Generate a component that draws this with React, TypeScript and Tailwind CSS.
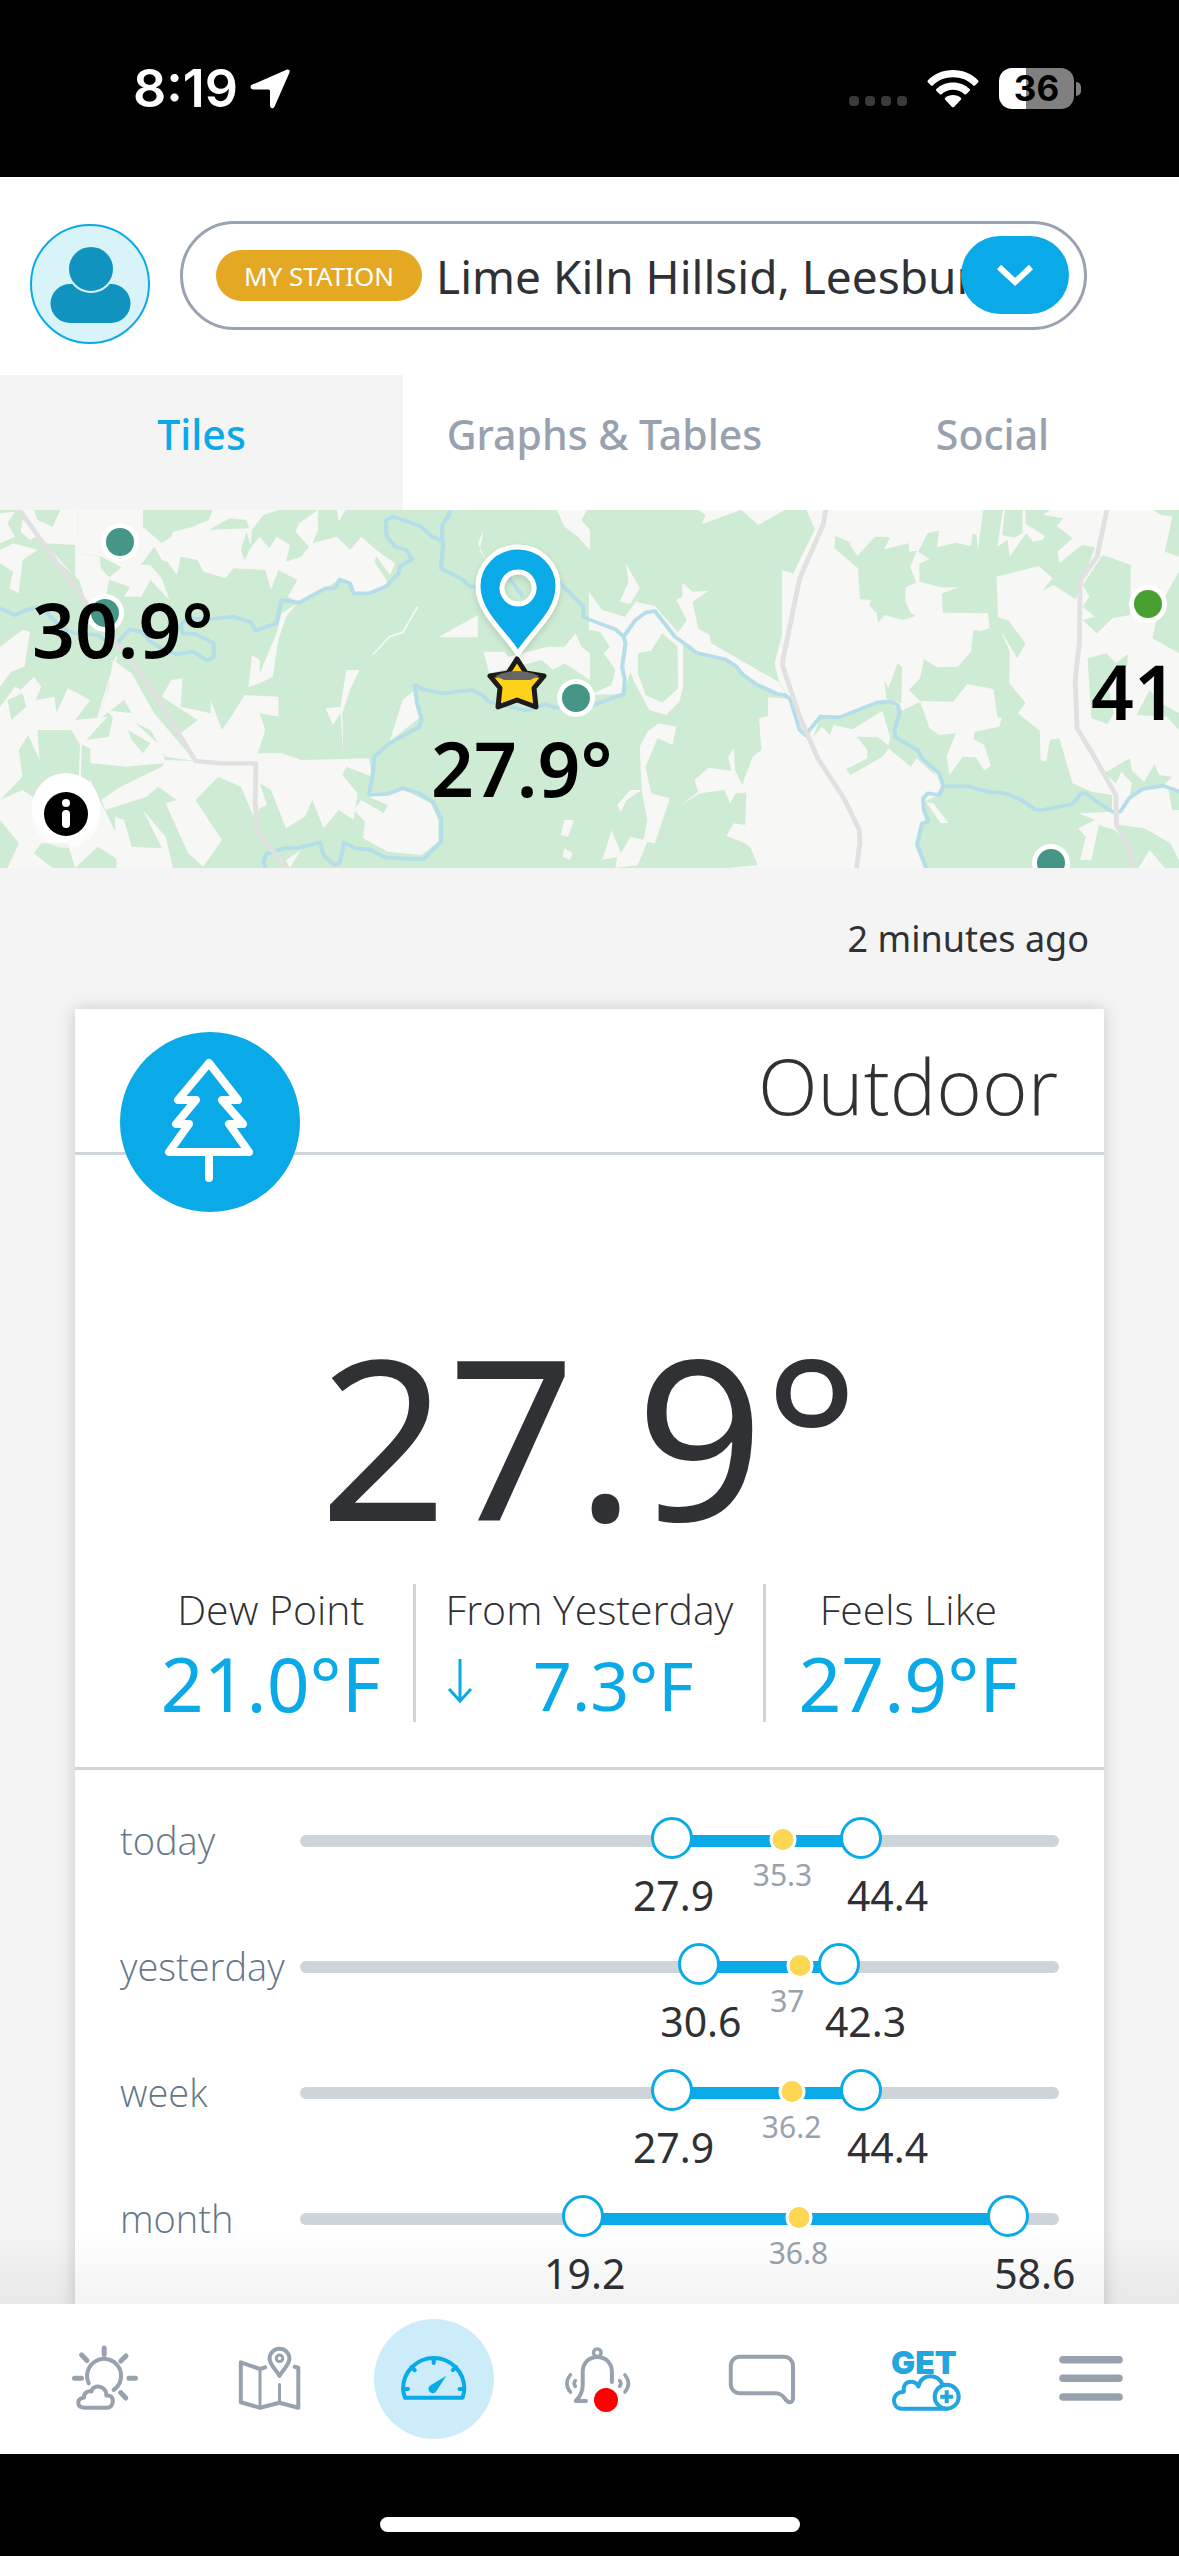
import { useState } from "react";
import type { ReactNode } from "react";
import clsx from "clsx";

type RangeRow = {
  label: string;
  min: string;
  avg: string;
  max: string;
  pos: [number, number, number]; // min / avg / max as a percentage of the track
};

const tabs = ["Tiles", "Graphs & Tables", "Social"];

const ranges: RangeRow[] = [
  { label: "today", min: "27.9", avg: "35.3", max: "44.4", pos: [49, 63.6, 73.9] },
  { label: "yesterday", min: "30.6", avg: "37", max: "42.3", pos: [52.6, 65.9, 71] },
  { label: "week", min: "27.9", avg: "36.2", max: "44.4", pos: [49, 64.8, 73.9] },
  { label: "month", min: "19.2", avg: "36.8", max: "58.6", pos: [37.3, 65.7, 93.3] },
];

// open land, drawn over the forest colour (west half)
const landWest = [
  "50,30 205,30 208,160 265,170 268,205 290,232 330,195 400,195 430,235 450,300 400,240 375,290 330,290 345,260 290,240 280,300 230,310 210,240 160,190 130,140",
  "205,30 380,30 380,80 430,130 455,110 460,95 530,75 540,90 670,85 665,145 690,110 715,145 735,110 770,135 760,185 800,170 830,130 895,110 930,150 960,110 1000,150 1050,190 1025,255 980,280 940,280 930,250 903,238 865,265 795,308 765,290 790,240 740,210 720,270 705,210 620,205 600,235 540,215 525,180 480,170 470,225 445,185 430,180 410,140 370,200 320,200 270,170 208,160",
  "565,30 740,30 700,45 665,95 655,60 610,55 540,100 520,75 555,60",
  "795,70 845,30 845,90 825,145 785,95",
  "895,30 918,30 900,65",
  "0,40 40,35 20,70 40,110 0,130",
  "0,150 35,130 100,150 60,180 50,280 25,265 35,215 0,190",
  "60,60 110,100 80,120 55,95",
  "0,440 60,390 80,395 65,500 30,515 0,560",
  "0,620 40,560 55,570 90,530 110,560 95,600 145,590 150,640 180,565 240,600 200,660 285,650 230,720 320,705 350,730 340,800 240,790 240,745 210,730 190,690 100,690 105,780 75,705 50,750 60,830 0,900",
  "300,480 350,520 410,640 500,760 520,783 440,770 400,690 360,670 430,740 440,790 330,800 320,740 285,735 300,650 280,630 350,640 330,600 260,660 290,560",
  "430,590 455,540 485,535 480,620 560,640 560,600 590,690 620,640 650,585 740,590 740,650 690,640 705,690 685,760 750,760 800,780 980,775 990,830 920,800 910,825 950,880 940,960 900,930 860,985 830,900 810,950 760,985 720,870 690,850 710,915 690,925 678,960 640,860 580,830 520,900 560,970 590,1020 540,1100 500,1060 440,910 470,900 420,860 390,890 280,930 270,900 320,860 430,800 440,780 520,783 480,700 525,660",
  "660,560 670,465 690,480 690,520 735,400 748,340 790,310 760,350 740,420 725,530 690,550",
  "920,510 955,510 930,570 910,640 912,765 905,640 885,675 865,625 905,620",
  "1070,600 1102,570 1118,650 1035,725",
  "1035,880 1075,870 1145,910 1165,960 1165,1025 1120,1065 1030,1055 965,1015 970,965 940,930 960,900 1020,940 1030,915 980,890",
  "1285,90 1275,150 1300,200 1270,130",
  "1165,412 1270,345 1270,412",
  "1285,455 1340,455 1350,470 1455,440 1500,440 1530,400 1545,440 1568,460 1568,540 1500,490 1470,510 1440,480 1300,520",
  "1480,30 1560,30 1545,60 1568,90 1568,150 1535,110 1500,80",
  "1500,960 1525,960 1510,1010 1490,1005",
  "1500,1045 1522,1060 1515,1080 1495,1070",
  "0,900 60,870 100,900 150,920 240,840 265,900 300,980 330,1060 420,1065 420,1104 350,1104 260,1040 200,1104 180,1030 110,1030 90,1060 140,1104 20,1104 50,1030 0,960",
  "305,950 330,960 350,1040 430,1045 380,930 440,1010 460,1104 310,1104",
  "760,1080 800,1050 770,1104",
];

// patches of forest inside the open land (west half)
const forestWest = [
  "90,30 160,30 140,80 100,60",
  "120,130 200,135 200,230 175,200",
  "1000,170 1040,230 1030,245 995,185",
  "640,150 655,95 668,140 650,180",
  "20,600 60,580 70,620 30,660",
  "130,760 200,750 190,800 150,820",
  "340,690 400,730 380,760 350,720",
];

// open land, drawn over the forest colour (east half)
const landEast = [
  "578,30 1568,30 1568,1104 370,1104 448,1095 430,1045 415,1030 365,1008 385,970 415,975 418,880 405,860 435,770 458,750 452,655 476,648 476,592 535,597 505,545 493,490 513,405 513,210 543,220 600,88",
  "290,30 405,30 300,72 310,45",
  "405,30 520,30 450,75",
  "98,190 135,265 110,312 82,305 105,245",
  "248,248 275,275 318,272 275,305 290,385 320,405 325,430 503,545 535,597 500,582 445,553 410,525 362,478 285,458 228,410 260,360 232,300 248,290",
  "0,360 0,275 35,330 95,350 125,305 175,318 235,395 250,430 250,560 240,605 205,645 160,630 120,545 110,515 92,582 0,585 60,555 70,510 40,460 55,440 30,395 0,390",
  "185,670 232,680 222,735 182,715 150,800 165,880 215,895 175,1030 155,1025 130,1095 70,1104 75,1070 35,1080 60,990 85,1060 110,1010 145,1020 155,960 140,870 100,900 85,935 75,915 110,870 140,870 135,740 155,695",
  "280,840 318,803 378,812 370,770 385,745 388,810 410,860 415,880 390,880 375,910 360,870 295,880 245,915 290,875",
];

const forestEast = [
  "655,108 698,128 690,128 713,168 760,110 800,112 785,148 850,130 850,155 872,152 853,200 870,248 842,262 840,300 853,335 868,348 835,360 785,345 768,370 765,340 745,315 750,300 720,298 715,205 652,145",
  "878,190 905,178 875,155 900,100 930,92 925,142 975,128 1015,138 1020,100 1030,105 1033,155 1048,30 1100,30 1085,140 1112,120 1118,170 1162,100 1180,125 1205,120 1212,108 1160,72 1160,30 1225,30 1207,45 1260,55 1243,78 1285,115 1245,155 1250,190 1310,135 1345,142 1293,298 1235,255 1205,272 1232,235 1195,198 1083,230 1087,352 1115,362 1160,430 1138,475 1100,402 1035,395 1065,385 1060,340 940,338 938,280 985,262 935,262 878,245",
  "1105,30 1152,30 1152,100 1130,113 1098,105",
  "890,478 925,502 980,500 1035,490 1118,455 1117,550 1160,608 1140,640 1198,692 1200,780 1215,785 1225,720 1250,715 1285,850 1335,875 1390,885 1390,935 1308,880 1285,912 1205,930 1150,900 1060,875 942,858 930,820 875,752 815,712 826,635 880,605 905,685 930,705 975,700 950,770 958,825 993,770 1028,772 1050,810 1068,798 1050,735 1022,718 1025,695 1090,680 1097,655 1085,650 1075,567 1005,552 968,605 880,603 850,570 880,535",
  "1022,390 1098,402 1118,455 1030,500 980,500 1015,455",
  "785,540 795,565 820,490 832,500 830,610 790,595",
  "595,712 620,680 640,705 650,675 700,688 780,632 800,712 795,745 855,800 870,775 925,830 875,752 812,712 826,635 800,604 765,608 665,652 615,652",
  "712,710 768,712 800,740 780,770 695,825 683,808 740,775 740,750",
  "942,858 1060,875 1150,900 1205,930 1285,912 1308,880 1390,935 1300,940 1345,960 1300,985 1320,1010 1305,1080 1335,1080 1355,975 1397,990 1430,1030 1440,1104 898,1104 872,1035 885,970 902,965 888,920 895,905 935,970 955,968 915,910 890,905 930,885",
  "1410,975 1475,985 1545,1030 1568,1080 1568,1104 1530,1104 1490,1050 1460,1104 1445,1104 1442,1070",
  "1365,165 1440,195 1438,345 1390,355 1350,400 1312,360 1345,350 1312,320 1330,290 1312,255",
  "1325,475 1375,460 1400,490 1432,462 1430,500 1380,560 1395,640 1378,672 1335,655",
  "1500,30 1568,30 1568,170 1530,155 1550,50 1520,45",
  "1568,215 1530,290 1510,350 1497,415 1568,460",
  "1455,645 1490,570 1520,610 1568,640 1568,690 1535,650",
  "1370,818 1438,775 1443,812 1475,845 1503,792 1515,825 1550,830 1525,857 1470,868 1435,895 1443,850 1415,815 1400,850",
  "1540,870 1568,875 1568,930 1550,930",
  "130,460 165,452 195,400 235,440 237,565 195,608 150,585 130,520",
];

const riversWest = [
  "0,325 40,345 70,330 100,322 130,345 165,385 200,400 260,405 285,425 310,430 345,388 375,395 400,425 430,445 470,463 515,455 550,482 568,470 568,430 520,402 485,400 480,375 500,355 560,357 620,350 665,365 680,392 735,370 748,300 795,308 865,265 890,265 903,238 930,250 940,280 980,280 1025,260 1060,220 1062,200 1095,178 1080,150 1050,140 1028,110 1025,62 1045,50 1120,80 1145,108 1178,125 1172,205 1225,235 1250,260 1300,262",
  "1195,30 1193,45 1175,75 1175,120",
  "1350,230 1390,290",
  "1480,240 1520,285 1550,320 1550,350 1570,358",
  "980,885 990,830 995,770 1035,730 1115,680 1120,655 1108,610 1102,555 1125,568 1175,580 1255,570 1280,585 1300,605 1400,632 1450,612 1470,622 1570,620",
  "980,885 1030,882 1070,865 1110,878 1150,905 1172,955 1172,1025 1125,1078 1025,1073 980,1048 945,1045 915,1028 902,1090 888,1095 860,1065 850,1028 795,1043 755,1045 708,1062 700,1085 708,1110",
];

const riversEast = [
  "0,358 70,388 92,410 97,430 88,500 95,540 92,582 0,620",
  "92,410 122,362 150,338 175,333 228,410 265,440 285,458 362,478 390,498 410,525 445,553 500,582 520,585 535,597 560,690 575,705 615,650 665,652 765,608 800,604 820,615 826,635 812,690 815,712 875,752 885,775 930,820 942,858 1010,860 1060,875 1105,880 1150,900 1185,928 1205,930 1285,912 1308,880 1320,880 1350,905 1390,935 1412,935 1435,895 1470,868 1525,857 1570,875",
  "942,858 930,885 900,880 888,895 890,930 902,965 885,970 872,1035 898,1110",
];

const roadsWest = ["50,26 130,155 230,310 315,440 355,490 420,600 520,783 585,790 685,790", "680,790 678,910 685,1000 768,1110"];

const roadsEast = [
  "630,26 622,75 560,235 515,480 515,500 560,650 608,775 680,900 718,990 720,1030 710,1110",
  "1377,26 1350,170 1307,240 1305,260 1303,430 1292,540 1297,685 1340,765 1400,885 1402,975 1430,1030 1442,1070 1440,1110",
];

function Shapes({ items, fill }: { items: string[]; fill: string }) {
  return <>{items.map((p) => <polygon key={p} points={p} fill={fill} />)}</>;
}

function Lines({ items, stroke, width }: { items: string[]; stroke: string; width: number }) {
  return (
    <>
      {items.map((p) => (
        <polyline key={p} points={p} fill="none" stroke={stroke} strokeWidth={width} strokeLinejoin="round" />
      ))}
    </>
  );
}

function StationDot({ x, y, color = "#459687" }: { x: number; y: number; color?: string }) {
  return (
    <g>
      <circle cx={x} cy={y} r="19" fill="#fff" />
      <circle cx={x} cy={y} r="14" fill={color} />
    </g>
  );
}

function StationMap() {
  return (
    <section aria-label="Station map" className="relative">
      <svg viewBox="0 0 1179 358" className="block w-full">
        <rect width="1179" height="358" fill="#ceebd3" />
        <g transform="scale(0.3763 0.3333) translate(0 -30)">
          <Shapes items={landWest} fill="#f7f7f5" />
          <Shapes items={forestWest} fill="#ceebd3" />
          <Lines items={riversWest} stroke="#b3deea" width={11} />
          <Lines items={roadsWest} stroke="#e1e1e1" width={13} />
          <Lines items={["310,470 260,655 215,730 212,840", "1110,320 1070,398 1035,410 990,465"]} stroke="#f7f7f5" width={5} />
        </g>
        <g transform="translate(589 0) scale(0.3763 0.3333) translate(0 -30)">
          <Shapes items={landEast} fill="#f7f7f5" />
          <Shapes items={forestEast} fill="#ceebd3" />
          <Lines items={riversEast} stroke="#b3deea" width={11} />
          <Lines items={roadsEast} stroke="#e1e1e1" width={13} />
        </g>

        <StationDot x={120} y={32} />
        <StationDot x={105} y={103} />
        <StationDot x={576} y={188} />
        <StationDot x={1051} y={353} />
        <StationDot x={1148} y={94} color="#47a02f" />

        <g className="drop-shadow-md">
          <path
            d="M518 144 C505 122 478 104 478 76 A40 39 0 0 1 558 76 C558 104 531 122 518 144Z M518 62 a16 16 0 1 0 0.1 0Z"
            fill="#0aa9e8"
            fillRule="evenodd"
            stroke="#fff"
            strokeWidth="5"
          />
        </g>
        <path
          d="M517 149 L526 163 L544 166 L534 178 L536 197 L517 190 L498 197 L500 178 L490 166 L508 163Z"
          fill="#ffd21a"
          stroke="#1c1b17"
          strokeWidth="5"
          strokeLinejoin="round"
        />
        <path d="M495 166 Q517 156 539 166 L530 170 H504Z" fill="#666" />

        <g fontFamily="'Noto Sans', sans-serif" fontWeight="600" fontSize="75" fill="#000">
          <text x="32" y="148">30.9°</text>
          <text x="431" y="287">27.9°</text>
          <text x="1091" y="210">41</text>
        </g>
      </svg>
      <button type="button" aria-label="Map information" className="absolute bottom-5 left-7 size-19">
        <svg viewBox="0 0 76 76" className="size-full">
          <circle cx="38" cy="42" r="34" fill="#fff" opacity="0.6" />
          <circle cx="38" cy="35" r="34" fill="#fff" />
          <circle cx="38" cy="42" r="22" fill="#000" />
          <circle cx="38" cy="31" r="4" fill="#fff" />
          <rect x="34" y="38" width="8" height="18" rx="4" fill="#fff" />
        </svg>
      </button>
    </section>
  );
}

function StatusBar() {
  return (
    <div className="flex h-[177px] shrink-0 items-center justify-between bg-black pr-[98px] pl-[133px] text-white">
      <div className="flex items-center gap-3 font-['Inter',sans-serif]">
        <span className="text-[52px] leading-none font-semibold">8:19</span>
        <svg viewBox="0 0 40 40" className="size-10 fill-white">
          <path d="M36.5 0.8 C38.8 -0.2 40.4 1.4 39.4 3.8 L24.6 37.4 C23.4 40.2 20 39.6 20 36.4 V22 Q20 20.4 18.4 20.4 H3.6 C0.2 20.4 -0.6 17 2.4 15.6Z" />
        </svg>
      </div>
      <div className="flex items-center">
        <div className="mt-6 mr-5 flex gap-[6px]">
          {[0, 1, 2, 3].map((i) => (
            <span key={i} className="size-[10px] rounded-[4px] bg-[#3a3a3a]" />
          ))}
        </div>
        <svg viewBox="0 0 52 38" className="mr-5 h-[38px] w-[52px] fill-white">
          <path d="M26 0 C36 0 45 3.8 51.2 10.4 Q52 11.3 51.2 12.2 L48 15.4 Q47.1 16.2 46.2 15.4 C41 10 34 7.2 26 7.2 S11 10 5.8 15.4 Q4.9 16.2 4 15.4 L0.8 12.2 Q0 11.3 0.8 10.4 C7 3.8 16 0 26 0Z" />
          <path d="M26 12.4 C32.6 12.4 38.4 14.9 42.7 19 Q43.6 19.9 42.7 20.8 L39.2 24.2 Q38.3 25 37.4 24.2 C34.3 21.4 30.4 19.7 26 19.7 S17.7 21.4 14.6 24.2 Q13.7 25 12.8 24.2 L9.3 20.8 Q8.4 19.9 9.3 19 C13.6 14.9 19.4 12.4 26 12.4Z" />
          <path d="M26 25 C29 25 31.7 26 33.8 27.8 Q34.8 28.7 33.8 29.7 L27 36.9 Q26 37.8 25 36.9 L18.2 29.7 Q17.2 28.7 18.2 27.8 C20.3 26 23 25 26 25Z" />
        </svg>
        <div className="flex h-[41px] w-[75px] items-center justify-center rounded-[13px] bg-[linear-gradient(90deg,#fff_36%,#808080_36%)] font-['Inter',sans-serif] text-[35px] leading-none font-bold text-black">
          36
        </div>
        <span className="ml-[2px] h-[14px] w-[5px] rounded-r-full bg-[#808080]" />
      </div>
    </div>
  );
}

function Header() {
  return (
    <header className="flex shrink-0 items-start bg-white px-[30px] pt-11 pb-[30px]">
      <button type="button" aria-label="Account" className="mt-[3px] mr-[30px] shrink-0 rounded-full">
        <svg viewBox="0 0 120 120" className="mb-px size-30">
          <circle cx="60" cy="60" r="59" fill="#d9f4f9" stroke="#0aa9e8" strokeWidth="2" />
          <path d="M40 60 H81 A19.5 19.5 0 0 1 81 99 H40 A19.5 19.5 0 0 1 40 60Z" fill="#1193bf" />
          <circle cx="61" cy="45" r="23" fill="#1193bf" stroke="#d9f4f9" strokeWidth="2" />
        </svg>
      </button>
      <div className="relative mr-[62px] flex h-[109px] min-w-0 flex-1 items-center rounded-full border-3 border-[#98a2b0] pr-4 pl-[33px]">
        <span className="mr-[14px] flex h-[51px] shrink-0 items-center rounded-full bg-[#e5a823] px-7 text-[26px] leading-none text-white">
          MY STATION
        </span>
        <select
          aria-label="Station"
          className="min-w-0 flex-1 appearance-none bg-transparent text-[46px] leading-[64px] text-[#303134] outline-none"
        >
          <option>Lime Kiln Hillsid, Leesburg</option>
        </select>
        <span className="pointer-events-none absolute top-3 right-[15px] flex h-[78px] w-[108px] items-center justify-center rounded-full bg-[#0aa9e8]">
          <svg viewBox="0 0 40 24" className="h-6 w-10">
            <path d="M4 4 L20 19 L36 4" fill="none" stroke="#fff" strokeWidth="6" />
          </svg>
        </span>
      </div>
    </header>
  );
}

function Stat({ label, children, className }: { label: string; children: ReactNode; className?: string }) {
  return (
    <div className={clsx("flex h-[138px] flex-col items-center", className)}>
      <span className="font-['Open_Sans',sans-serif] text-[41px] leading-[50px] font-light whitespace-nowrap text-[#303134]">{label}</span>
      {children}
    </div>
  );
}

function Range({ row }: { row: RangeRow }) {
  const [min, avg, max] = row.pos;
  return (
    <div className="flex h-[126px] items-start">
      <span className="w-[180px] shrink-0 font-['Open_Sans',sans-serif] text-[38px] leading-[60px] font-light text-[#657789]">
        {row.label}
      </span>
      <div className="relative mt-[25px] h-3 flex-1 rounded-full bg-[#cdd4da]">
        <div className="absolute h-full bg-[#0aa9e8]" style={{ left: `${min}%`, width: `${max - min}%` }} />
        <span
          className="absolute top-[-9px] size-[27px] -translate-x-1/2 rounded-full border-3 border-white bg-[#fdd654]"
          style={{ left: `${avg}%` }}
        />
        <span
          className="absolute top-[-18px] size-[42px] -translate-x-1/2 rounded-full border-3 border-[#0aa9e8] bg-white"
          style={{ left: `${min}%` }}
        />
        <span
          className="absolute top-[-18px] size-[42px] -translate-x-1/2 rounded-full border-3 border-[#0aa9e8] bg-white"
          style={{ left: `${max}%` }}
        />
        <span className="absolute top-5 -ml-[30px] text-[30px] leading-10 text-[#98a2ae]" style={{ left: `${avg}%` }}>
          {row.avg}
        </span>
        <span className="absolute top-8 -ml-[39px] text-[41px] leading-[56px] text-[#303134]" style={{ left: `${min}%` }}>
          {row.min}
        </span>
        <span className="absolute top-8 -ml-[14px] text-[41px] leading-[56px] text-[#303134]" style={{ left: `${max}%` }}>
          {row.max}
        </span>
      </div>
    </div>
  );
}

function OutdoorCard() {
  return (
    <article className="mx-[75px] bg-white pb-20 shadow-[0_0_16px_rgba(0,0,0,0.18)]">
      <div className="relative flex h-[146px] items-center justify-end border-b-3 border-[#cdd4da] pt-2 pr-[46px]">
        <span className="absolute top-[23px] left-[45px] size-[180px] rounded-full bg-[#0aa9e8]">
          <svg viewBox="0 0 180 180" className="size-full">
            <path
              d="M89 31 L58 68 H76 L56 92 H69 L49 120 H129 L109 92 H123 L102 68 H118Z M89 120 V146"
              fill="none"
              stroke="#fff"
              strokeWidth="8"
              strokeLinecap="round"
              strokeLinejoin="round"
            />
          </svg>
        </span>
        <h2 className="font-['Open_Sans',sans-serif] text-[78px] leading-none font-light text-[#303134]">Outdoor</h2>
      </div>

      <div className="flex h-[429px] items-end justify-center">
        <span className="text-[224px] leading-[298px] text-[#303134]">27.9°</span>
      </div>

      <div className="flex justify-center pb-[45px]">
        <Stat label="Dew Point" className="px-8">
          <span className="text-[75px] leading-[98px] text-[#0aa9e8]">21.0°F</span>
        </Stat>
        <Stat label="From Yesterday" className="border-x-3 border-[#cdd4da] px-[30px]">
          <span className="flex w-full items-center justify-between pr-10 text-[68px] leading-[102px] text-[#0aa9e8]">
            <svg viewBox="0 0 28 46" className="mb-2 h-[46px] w-7">
              <path d="M14 1 V43 M3 31 L14 43 L25 31" fill="none" stroke="#0aa9e8" strokeWidth="3" />
            </svg>
            7.3°F
          </span>
        </Stat>
        <Stat label="Feels Like" className="px-8">
          <span className="text-[75px] leading-[98px] text-[#0aa9e8]">27.9°F</span>
        </Stat>
      </div>

      <div className="border-t-3 border-[#cdd4da] pt-10 pr-[45px] pl-[45px]">
        {ranges.map((row) => (
          <Range key={row.label} row={row} />
        ))}
      </div>
    </article>
  );
}

function NavButton({ label, active, children }: { label: string; active?: boolean; children: ReactNode }) {
  return (
    <button
      type="button"
      aria-label={label}
      className={clsx("flex size-30 items-center justify-center rounded-full", active && "bg-[#cdecf9]")}
    >
      <svg
        viewBox="0 0 72 72"
        className="size-18"
        fill="none"
        stroke={active ? "#0aa9e8" : "#98a2ae"}
        strokeWidth="4"
        strokeLinecap="round"
        strokeLinejoin="round"
      >
        {children}
      </svg>
    </button>
  );
}

function BottomNav() {
  return (
    <nav className="flex h-[150px] shrink-0 items-center justify-between bg-white pr-7 pl-[45px]">
      <NavButton label="Forecast">
        <path d="M19.8 40.3 A17 17 0 1 1 44.6 47" />
        <path d="M35.2 5 V11.5 M5.5 35.3 H12.5 M60 35.3 H66.5 M12.6 12 L18 17.5 M57 13 L51.8 18 M51.6 49.6 L56.8 55" strokeWidth="5" />
        <path d="M16 64.7 H38 C42 64.7 43.8 61.5 43.8 58 C43.8 54 41.5 52 37.3 52.5 C37.5 47 33.5 43.5 29 43.5 C25.5 43.5 23 45.5 22.5 48.5 C18 47.5 14.8 50.5 15 54.5 C11 55.2 9.3 57.5 9.3 59.5 C9.3 63 12 64.7 16 64.7Z" />
      </NavButton>
      <NavButton label="Map">
        <path d="M32.2 24.3 L27 26 L7.8 19.3 V59.3 L27 64.7 L46.5 59.7 L65.3 64.7 V24.7 L61.6 23.8" />
        <path d="M27 26 V64 M46.5 41.5 V59" strokeWidth="3" />
        <path d="M46.5 33 C43.5 26.5 36.6 22.5 36.6 15.6 A9.9 9.9 0 0 1 56.4 15.6 C56.4 22.5 49.5 26.5 46.5 33Z" />
        <circle cx="46.5" cy="15.3" r="3.3" strokeWidth="3" />
      </NavButton>
      <NavButton label="Dashboard" active>
        <path d="M7 54.7 H64.6 C65.5 52 66.3 49 66.3 45.6 A30.6 30.6 0 0 0 5.1 45.6 C5.1 49 6 52 7 54.7Z" />
        <path d="M35.7 15 V20 M5 46 H10 M61.5 46 H66 M13.5 24 L16.8 27.2 M58 24 L54.8 27.2" />
        <path d="M48.4 32.7 L38.5 48 A4.3 4.3 0 1 1 33 42Z" fill="#0aa9e8" stroke="none" />
      </NavButton>
      <NavButton label="Alerts">
        <circle cx="35.3" cy="9.7" r="3.8" strokeWidth="3.4" />
        <path d="M24 58 H13.7 C19 53 20.7 48 20.7 42 V28.7 C20.7 20 27 14 35.3 14 C43.6 14 49.9 20 49.9 28.7 V39" />
        <path d="M8.3 32 Q1.5 40.5 8.3 49 M13.3 37.7 Q11 40.5 13.3 43.3 M63 32 Q69.8 40.5 63 49 M57.7 37.7 Q60 40.5 57.7 43.3" strokeWidth="3.6" />
        <circle cx="44" cy="57" r="12" fill="#f00" stroke="none" />
      </NavButton>
      <NavButton label="Messages">
        <path d="M13.8 13.7 H58 A9 9 0 0 1 67 22.7 V55 C67 59.5 63.5 60.5 60.5 57.5 C57.5 54.5 56.5 50.3 49 50.3 H13.8 A9 9 0 0 1 4.8 41.3 V22.7 A9 9 0 0 1 13.8 13.7Z" />
      </NavButton>
      <NavButton label="Get a station">
        <g stroke="#23a6df">
          <text x="0" y="31" fontFamily="Inter, sans-serif" fontWeight="900" fontSize="32" fill="#23a6df" stroke="none">
            GET
          </text>
          <path d="M55.7 65.7 H11 C6 65.7 3 62 3 57.5 C3 52.5 7 48.7 12.8 48.7 C12 42 15 38.7 20 38.7 C23.5 38.7 26 40.5 27.4 43.5 C29 37 33.5 33.2 39.5 33.2 C45 33.2 49.5 36.5 51.5 41.5" />
          <circle cx="55.7" cy="53.7" r="12" />
          <path d="M55.7 49.2 V58.2 M51.2 53.7 H60.2" strokeLinecap="square" />
        </g>
      </NavButton>
      <NavButton label="Menu">
        <path d="M8 16.7 H64 M8 35.3 H64 M8 54 H64" strokeWidth="7.6" />
      </NavButton>
    </nav>
  );
}

export default function App() {
  const [tab, setTab] = useState(tabs[0]);

  return (
    <div className="flex h-screen flex-col bg-[#f4f4f4] font-['Noto_Sans',sans-serif]">
      <StatusBar />
      <Header />

      <div role="tablist" className="grid shrink-0 grid-cols-[403fr_403fr_373fr] bg-white">
        {tabs.map((name) => (
          <button
            key={name}
            type="button"
            role="tab"
            aria-selected={tab === name}
            onClick={() => setTab(name)}
            className={clsx(
              "h-[135px] pb-4 text-[41px] leading-none font-medium",
              tab === name ? "bg-[#f4f4f4] text-[#0aa9e8]" : "text-[#98a2ae]"
            )}
          >
            {name}
          </button>
        ))}
      </div>

      <main className="relative min-h-0 flex-1 overflow-hidden">
        <StationMap />
        <p className="flex h-[141px] items-center justify-end pr-[90px] text-[36px] leading-none text-[#303134]">2 minutes ago</p>
        <OutdoorCard />
        {/* fade above the bottom bar */}
        <div className="pointer-events-none absolute inset-x-0 bottom-0 h-18 bg-linear-to-b from-transparent to-black/5" />
      </main>

      <BottomNav />
      <footer className="flex h-[102px] shrink-0 items-end justify-center bg-black pb-6">
        <span className="h-[15px] w-[420px] rounded-full bg-white" />
      </footer>
    </div>
  );
}
